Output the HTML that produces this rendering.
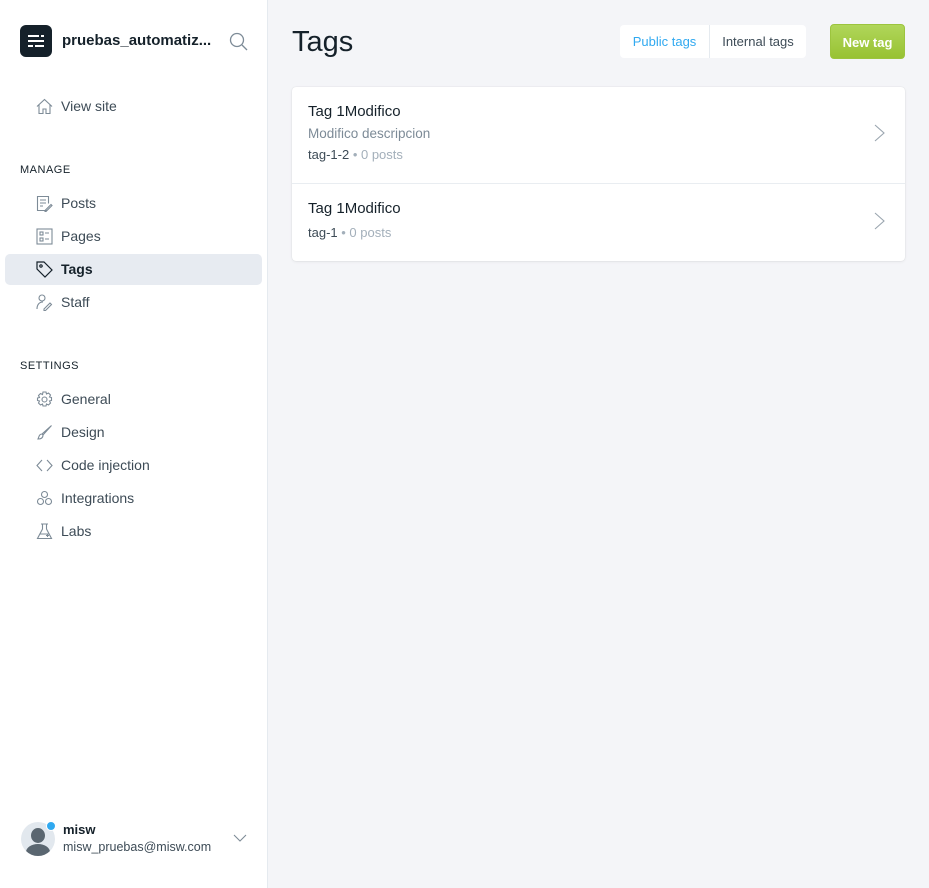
<!DOCTYPE html>
<html><head><meta charset="utf-8"><style>
*{box-sizing:border-box;margin:0;padding:0}
body{width:929px;height:888px;font-family:"Liberation Sans",sans-serif;background:#f4f5f8;position:relative;overflow:hidden;color:#15212a}
.side{position:absolute;left:0;top:0;width:268px;height:888px;background:#fff;border-right:1px solid #e5eaef}
.logo{position:absolute;left:20px;top:25px;width:32px;height:32px;border-radius:6px;background:#15212a}
.logo i{position:absolute;height:2px;background:#fff}
.site{position:absolute;left:62px;top:32px;font-size:15px;font-weight:bold;color:#15212a}
.srch{position:absolute;left:229px;top:32px}
.item{position:absolute;left:5px;width:257px;height:31px;font-size:14px;color:#3d4b56;padding-left:56px;line-height:31px;border-radius:5px}
.item svg{position:absolute;left:31px;top:7px}
.item.act{background:#e7ebf1;font-weight:bold;color:#15212a}
.hd{position:absolute;left:20px;font-size:11px;letter-spacing:.5px;color:#15212a}
h1{position:absolute;left:292px;top:26px;font-size:29px;font-weight:normal;color:#15212a}
.seg{position:absolute;left:620px;top:25px;width:186px;height:33px;background:#fff;border-radius:4px;font-size:13px;display:flex}
.seg div{line-height:33px;text-align:center}
.btn{position:absolute;left:830px;top:24px;width:75px;height:35px;border-radius:4px;background:linear-gradient(#b0d65a,#98c233);color:#fff;font-weight:bold;font-size:13px;text-align:center;line-height:35px;border:1px solid #9cc43e}
.card{position:absolute;left:292px;top:87px;width:613px;height:174px;background:#fff;border-radius:4px;box-shadow:0 0 1px rgba(0,0,0,.15),0 1px 3px rgba(0,0,0,.06)}
.t{position:absolute;left:16px;font-size:15px;color:#15212a}
.d{position:absolute;left:16px;font-size:13.5px;color:#7d8b97}
.s{position:absolute;left:16px;font-size:13px;color:#3d4b56}
.s span{color:#a3afba}
.chev{position:absolute;left:582px}
</style></head><body>
<div class="side">
<div class="logo"><i style="left:8px;top:10px;width:11px"></i><i style="left:21px;top:10px;width:3px"></i><i style="left:8px;top:15px;width:16px"></i><i style="left:8px;top:20px;width:5px"></i><i style="left:15px;top:20px;width:9px"></i></div>
<div class="site">pruebas_automatiz...</div>
<svg class="srch" width="19" height="19" viewBox="0 0 19 19" fill="none" stroke="#7d8b97" stroke-width="1.3"><circle cx="8" cy="8" r="6.5"/><path d="M13 13l5 5"/></svg>
<div class="item" style="top:91px"><svg width="17" height="17" viewBox="0 0 17 17" fill="none" stroke="#7d8b97" stroke-width="1.1"><path d="M1 8.5L8.5 1.5 16 8.5M3 7v8.5h4v-4.5h3v4.5h4V7"/></svg>View site</div>
<div class="hd" style="top:164px">MANAGE</div>
<div class="item" style="top:188px"><svg width="17" height="17" viewBox="0 0 17 17" fill="none" stroke="#7d8b97" stroke-width="1.1"><path d="M11 15.5H1.5v-14h11v7M4 5h6M4 8h6M4 11h3M9 15.5l6-6 1 1-6 6h-1z"/></svg>Posts</div>
<div class="item" style="top:221px"><svg width="17" height="17" viewBox="0 0 17 17" fill="none" stroke="#7d8b97" stroke-width="1.1"><rect x="1" y="1" width="15" height="15"/><rect x="4" y="4" width="3" height="3"/><rect x="4" y="10" width="3" height="3"/><path d="M9 5h4M9 11h4"/></svg>Pages</div>
<div class="item act" style="top:254px"><svg width="17" height="17" viewBox="0 0 17 17" fill="none" stroke="#15212a" stroke-width="1.2"><path d="M1 1h7l8 8-7 7-8-8z"/><circle cx="5" cy="5" r="1.2"/></svg>Tags</div>
<div class="item" style="top:287px"><svg width="17" height="17" viewBox="0 0 17 17" fill="none" stroke="#7d8b97" stroke-width="1.1"><circle cx="6" cy="4" r="3"/><path d="M1 15c0-4 2-7 6-7M8 15l6-6 1.5 1.5-6 6H8z"/></svg>Staff</div>
<div class="hd" style="top:360px">SETTINGS</div>
<div class="item" style="top:384px"><svg width="17" height="17" viewBox="0 0 17 17" fill="none" stroke="#7d8b97" stroke-width="1.1"><circle cx="8.5" cy="8.5" r="2.5"/><path d="M7 1h3l.5 2 2-1 2 2-1 2 2 .5v3l-2 .5 1 2-2 2-2-1-.5 2H7l-.5-2-2 1-2-2 1-2-2-.5V7l2-.5-1-2 2-2 2 1z"/></svg>General</div>
<div class="item" style="top:417px"><svg width="17" height="17" viewBox="0 0 17 17" fill="none" stroke="#7d8b97" stroke-width="1.1"><path d="M15.5 1.5L7 11 6 10zM6 10c-3 0-3 3-4 5 3 0 5-1 5-4"/></svg>Design</div>
<div class="item" style="top:450px"><svg width="17" height="17" viewBox="0 0 17 17" fill="none" stroke="#7d8b97" stroke-width="1.1"><path d="M6 3L1 8.5 6 14M11 3l5 5.5-5 5.5"/></svg>Code injection</div>
<div class="item" style="top:483px"><svg width="17" height="17" viewBox="0 0 17 17" fill="none" stroke="#7d8b97" stroke-width="1.1"><circle cx="8.5" cy="4.5" r="3"/><circle cx="4.5" cy="11.5" r="3"/><circle cx="12.5" cy="11.5" r="3"/></svg>Integrations</div>
<div class="item" style="top:516px"><svg width="17" height="17" viewBox="0 0 17 17" fill="none" stroke="#7d8b97" stroke-width="1.1"><path d="M5 1h7M6.5 1v5L1.5 15.5h14L10.5 6V1M4 11h9M10 12.5h3M11.5 11v3"/></svg>Labs</div>
<div style="position:absolute;left:21px;top:822px;width:34px;height:34px;border-radius:50%;background:#e2e8ee;overflow:hidden"><div style="position:absolute;left:10px;top:6px;width:14px;height:15px;border-radius:50%;background:#5a6670"></div><div style="position:absolute;left:5px;top:22px;width:24px;height:16px;border-radius:50%;background:#5a6670"></div></div>
<div style="position:absolute;left:46px;top:821px;width:10px;height:10px;border-radius:50%;background:#30a9f0;border:1px solid #fff"></div>
<div style="position:absolute;left:63px;top:822px;font-size:13px;font-weight:bold">misw</div>
<div style="position:absolute;left:63px;top:840px;font-size:12.5px;color:#3d4b56">misw_pruebas@misw.com</div>
<svg style="position:absolute;left:233px;top:834px" width="14" height="8" viewBox="0 0 14 8" fill="none" stroke="#7d8b97" stroke-width="1.1"><path d="M1 1l6 6 6-6"/></svg>
</div>
<h1>Tags</h1>
<div class="seg"><div style="width:90px;color:#30a9f0;border-right:1px solid #e5eaef">Public tags</div><div style="width:96px;color:#3d4b56">Internal tags</div></div>
<div class="btn">New tag</div>
<div class="card">
<div class="t" style="top:16px">Tag 1Modifico</div>
<div class="d" style="top:39px">Modifico descripcion</div>
<div class="s" style="top:60px">tag-1-2 <span>• 0 posts</span></div>
<svg class="chev" style="top:37px" width="12" height="18" viewBox="0 0 12 18" fill="none" stroke="#9aa5af" stroke-width="1.1"><path d="M1 1l9 8-9 8"/></svg>
<div style="position:absolute;left:0;top:96px;width:613px;height:1px;background:#e9edf1"></div>
<div class="t" style="top:113px">Tag 1Modifico</div>
<div class="s" style="top:138px">tag-1 <span>• 0 posts</span></div>
<svg class="chev" style="top:125px" width="12" height="18" viewBox="0 0 12 18" fill="none" stroke="#9aa5af" stroke-width="1.1"><path d="M1 1l9 8-9 8"/></svg>
</div>
</body></html>
